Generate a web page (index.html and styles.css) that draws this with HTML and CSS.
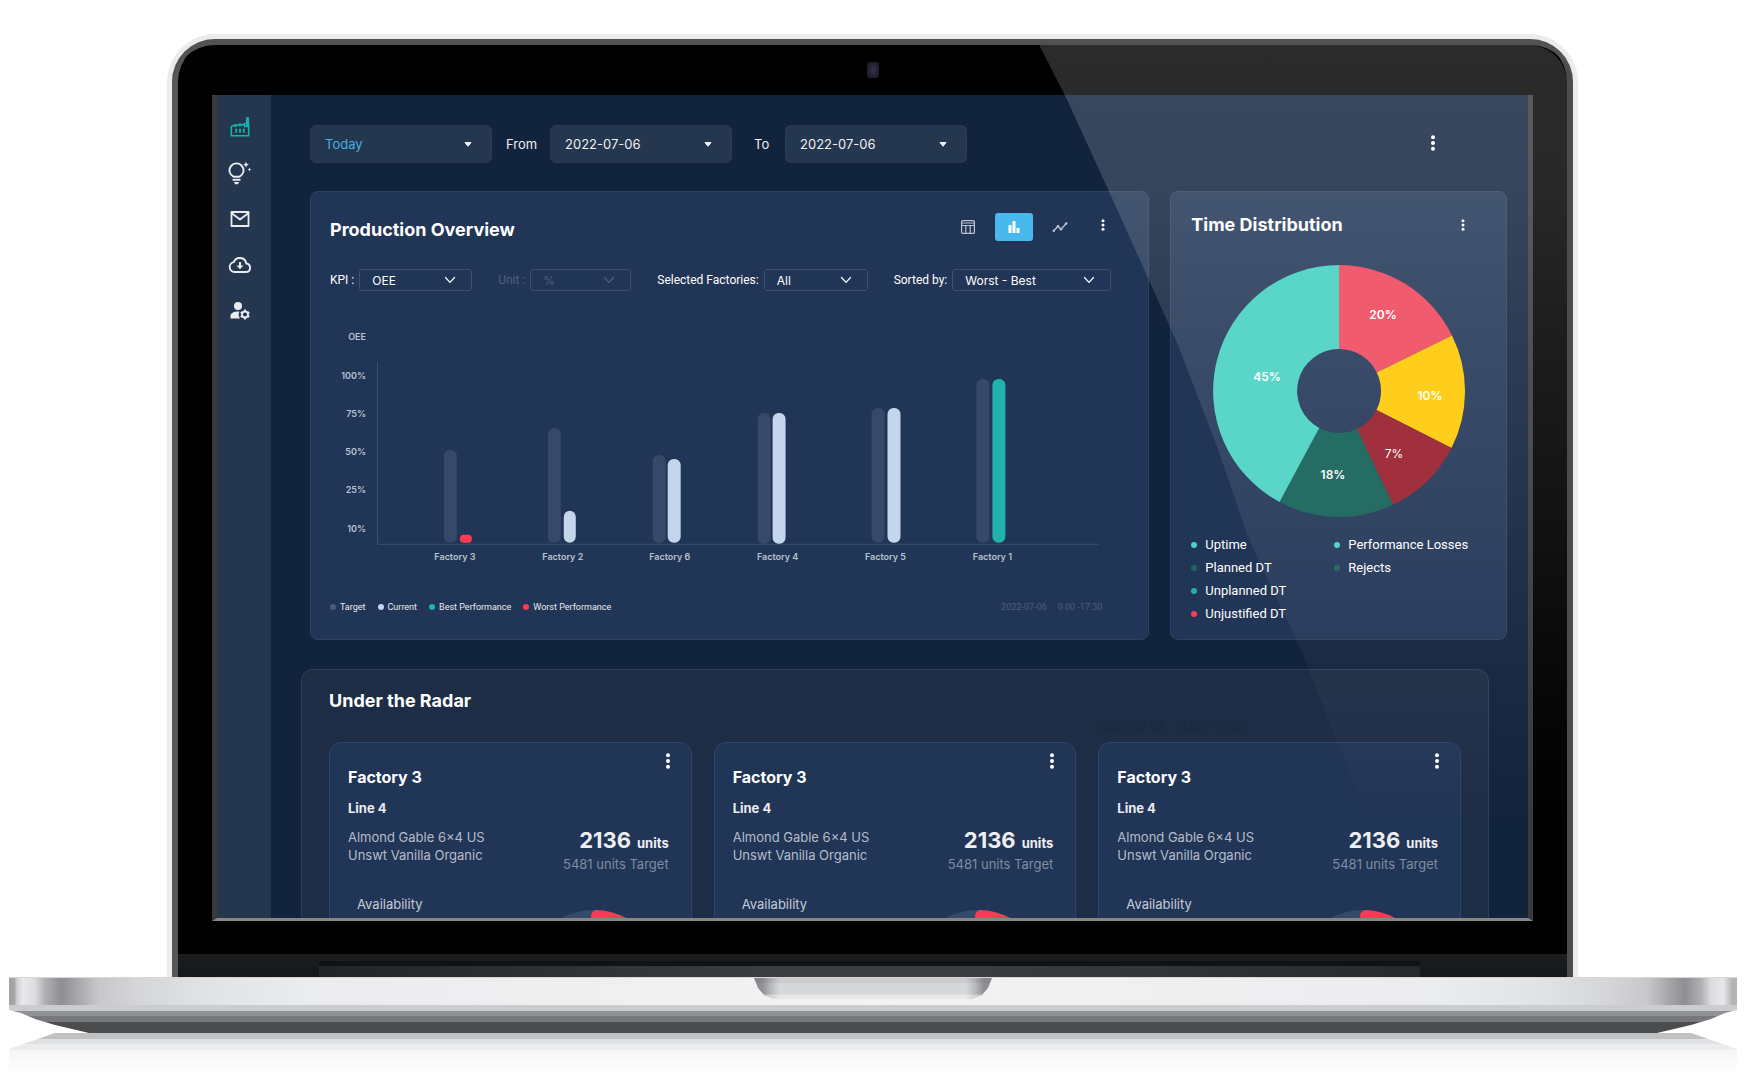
FILE: index.html
```html
<!DOCTYPE html>
<html lang="en">
<head>
<meta charset="utf-8">
<meta name="viewport" content="width=device-width, initial-scale=1">
<title>Production Overview</title>
<link rel="stylesheet" href="styles.css">
</head>
<body>
<svg class="defs" aria-hidden="true">
  <symbol id="caret" viewBox="0 0 8 5"><path d="M1 .5h6L4 4.300z" fill="currentColor" stroke="currentColor" stroke-linejoin="round"/></symbol>
  <symbol id="chevron" viewBox="0 0 12 8"><path d="M1.500 1.500 6 6.300l4.500-4.800" fill="none" stroke="currentColor" stroke-width="1.200" stroke-linecap="round"/></symbol>
  <symbol id="kebab" viewBox="0 0 4 16"><circle cx="2" cy="2.200" r="2"/><circle cx="2" cy="8" r="2"/><circle cx="2" cy="13.800" r="2"/></symbol>
  <symbol id="gauge" viewBox="0 0 136 136">
    <circle cx="68" cy="68" r="62" fill="none" stroke="#344a6b" stroke-width="12"/>
    <path d="M71 6a62 62 0 0 1 50 30" fill="none" stroke="#f23d54" stroke-width="12" stroke-linecap="round"/>
  </symbol>
</svg>
<div class="laptop">
  <div class="lid">
    <div class="bezel-top"><span class="camera"></span></div>
    <div class="screen">
      <nav class="sidebar" aria-label="Main">
        <a href="#" class="active" aria-label="Factories"><svg viewBox="0 0 24 24"><path d="M3.300 20.700v-9.200L7.500 9.800v1.400L12 9v1.500l4.500-1.600v2.600h4.200v9.200z" fill="none" stroke="currentColor" stroke-width="1.600"/><path d="M18.300 2h2.600l.6 9.500h-4.200z" fill="currentColor"/><path d="M8.200 13.800v4M12 13.800v4M15.800 13.800v4" stroke="currentColor" stroke-width="1.900"/></svg></a>
        <a href="#" aria-label="Insights"><svg viewBox="0 0 24 24"><g fill="none" stroke="currentColor" stroke-width="1.900"><path d="M5.700 15.800a7 7 0 1 1 5.600 0z" stroke-linejoin="round"/><path d="M4.500 18.800h8"/></g><path d="M5.800 21h5.400l-1.400 2.200H7.200zM18 .8l.9 2 2 .9-2 .9-.9 2-.9-2-2-.9 2-.9zM21.500 6.500l.6 1.400 1.400.6-1.400.6-.6 1.400-.6-1.400-1.400-.6 1.400-.6z" fill="currentColor"/></svg></a>
        <a href="#" aria-label="Messages"><svg viewBox="0 0 24 24"><path d="M3.500 5h17v14h-17zM3.500 6l8.500 6.500L20.500 6" fill="none" stroke="currentColor" stroke-width="1.800" stroke-linejoin="round"/></svg></a>
        <a href="#" aria-label="Downloads"><svg viewBox="0 0 24 24"><path d="M6.500 19a5 5 0 0 1-.8-9.900A6.600 6.600 0 0 1 18.300 10.500 4.300 4.300 0 0 1 18.500 19z" fill="none" stroke="currentColor" stroke-width="1.900"/><path d="M11 9h2v3.500h2.500L12 16.300l-3.500-3.800H11z" fill="currentColor"/></svg></a>
        <a href="#" aria-label="User settings"><svg viewBox="0 0 24 24"><circle cx="10" cy="7" r="4" fill="currentColor"/><path d="M2.500 19.500v-2.800c0-2.700 4-4.200 7.500-4.200.6 0 1 0 1.500.1a6.500 6.500 0 0 0 .5 6.900z" fill="currentColor"/><circle cx="17" cy="15.500" r="3" fill="none" stroke="currentColor" stroke-width="1.800"/><path d="M17 10.600v2M17 18.400v2M12.700 13.100l1.700 1M19.600 16.900l1.700 1M12.700 17.900l1.700-1M19.600 14.100l1.700-1" stroke="currentColor" stroke-width="1.900"/></svg></a>
      </nav>
      <main class="content">
        <div class="toolbar">
          <span class="field period"><select aria-label="Period"><option>Today</option></select><svg><use href="#caret"/></svg></span>
          <label for="from">From</label>
          <span class="field"><select id="from"><option>2022-07-06</option></select><svg><use href="#caret"/></svg></span>
          <label for="to" class="to">To</label>
          <span class="field"><select id="to"><option>2022-07-06</option></select><svg><use href="#caret"/></svg></span>
          <button class="kebab" aria-label="Page menu"><svg><use href="#kebab"/></svg></button>
        </div>

        <div class="overview">
          <section class="card production">
            <header>
              <h2>Production Overview</h2>
              <div class="views">
                <button aria-label="Table view"><svg viewBox="0 0 16 16" fill="none" stroke="currentColor" stroke-width="1.200"><rect x="1.600" y="1.600" width="12.800" height="12.800" rx="1"/><path d="M1.600 4h12.800M1.600 6.500h12.800M5.800 6.500v8M10.200 6.500v8"/></svg></button>
                <button class="selected" aria-label="Bar view"><svg viewBox="0 0 16 16" fill="currentColor"><path d="M2.500 6h3v8h-3zM6.500 2h3v12h-3zM10.500 9h3v5h-3z"/></svg></button>
                <button aria-label="Line view"><svg viewBox="0 0 16 16"><path d="M1.800 11.800 6 7.300l3 3L14.200 4.500" fill="none" stroke="currentColor" stroke-width="1.300"/><g fill="currentColor"><circle cx="1.800" cy="11.800" r="1.300"/><circle cx="6" cy="7.300" r="1.300"/><circle cx="9" cy="10.300" r="1.300"/><circle cx="14.200" cy="4.500" r="1.300"/></g></svg></button>
              </div>
              <button class="kebab small" aria-label="Production menu"><svg><use href="#kebab"/></svg></button>
            </header>
            <div class="filters">
              <div class="filter kpi"><label for="kpi">KPI :</label><span class="box"><select id="kpi"><option>OEE</option></select><svg><use href="#chevron"/></svg></span></div>
              <div class="filter unit"><label for="unit">Unit :</label><span class="box"><select id="unit" disabled><option>%</option></select><svg><use href="#chevron"/></svg></span></div>
              <div class="filter factories"><label for="factories">Selected Factories:</label><span class="box"><select id="factories"><option>All</option></select><svg><use href="#chevron"/></svg></span></div>
              <div class="filter sorted"><label for="sorted">Sorted by:</label><span class="box"><select id="sorted"><option>Worst - Best</option></select><svg><use href="#chevron"/></svg></span></div>
            </div>
            <svg class="chart" viewBox="0 0 800 260" role="img" aria-label="OEE by factory">
              <g class="axis-y"><text x="36" y="19">OEE</text><text x="36" y="58">100%</text><text x="36" y="96">75%</text><text x="36" y="134">50%</text><text x="36" y="172">25%</text><text x="36" y="211">10%</text></g>
              <path d="M47.500 41v182.500H769" fill="none" stroke="#3c5070"/>
              <g class="target"><rect x="114" y="129" width="13" height="93" rx="6"/><rect x="218" y="107" width="13" height="115" rx="6"/><rect x="323" y="134" width="13" height="88" rx="6"/><rect x="428" y="92" width="13" height="131" rx="6"/><rect x="542" y="87" width="13" height="135" rx="6"/><rect x="647" y="58" width="13" height="164" rx="6"/></g>
              <g class="current"><rect class="worst" x="130" y="214" width="12" height="8" rx="4"/><rect x="234" y="190" width="12" height="32" rx="6"/><rect x="338" y="138" width="13" height="84" rx="6"/><rect x="443" y="92" width="13" height="131" rx="6"/><rect x="558" y="87" width="13" height="135" rx="6"/><rect class="best" x="663" y="58" width="13" height="164" rx="6"/></g>
              <g class="axis-x"><text x="125" y="239">Factory 3</text><text x="233" y="239">Factory 2</text><text x="340" y="239">Factory 6</text><text x="448" y="239">Factory 4</text><text x="556" y="239">Factory 5</text><text x="663" y="239">Factory 1</text></g>
            </svg>
            <footer>
              <ul class="legend"><li class="c-target">Target</li><li class="c-current">Current</li><li class="c-best">Best Performance</li><li class="c-worst">Worst Performance</li></ul>
              <p class="stamp"><span>2022-07-06</span><span>0:00 -17:30</span></p>
            </footer>
          </section>

          <section class="card time">
            <header>
              <h2>Time Distribution</h2>
              <button class="kebab small" aria-label="Time menu"><svg><use href="#kebab"/></svg></button>
            </header>
            <svg class="pie" viewBox="-126 -126 252 252" role="img" aria-label="Time distribution">
              <path fill="#f05b6e" d="M0-126A126 126 0 0 1 113-55.500L37.700-18.500A42 42 0 0 0 0-42z"/>
              <path fill="#ffcd1b" d="M113-55.500A126 126 0 0 1 112.500 57L37.500 19A42 42 0 0 0 37.700-18.500z"/>
              <path fill="#a0303e" d="M112.500 57A126 126 0 0 1 54 113.800L18 38A42 42 0 0 0 37.500 19z"/>
              <path fill="#256c64" d="M54 113.800A126 126 0 0 1-59.500 111L-19.800 37A42 42 0 0 0 18 38z"/>
              <path fill="#5ad6c8" d="M-59.500 111A126 126 0 0 1 0-126V-42A42 42 0 0 0-19.800 37z"/>
              <g><text x="44" y="-72">20%</text><text x="91" y="9">10%</text><text class="light" x="55" y="67">7%</text><text x="-6" y="88">18%</text><text x="-72" y="-10">45%</text></g>
            </svg>
            <ul class="keys">
              <li class="c-uptime">Uptime</li><li class="c-planned">Planned DT</li><li class="c-best">Unplanned DT</li><li class="c-worst">Unjustified DT</li>
              <li class="c-uptime">Performance Losses</li><li class="c-planned">Rejects</li>
            </ul>
          </section>
        </div>

        <section class="radar">
          <header><h2>Under the Radar</h2><p class="stamp"><span>2022-07-06</span><span>0:00 -17:30</span></p></header>
          <div class="lines">
            <article class="line">
              <button class="kebab" aria-label="Line menu"><svg><use href="#kebab"/></svg></button>
              <h3>Factory 3</h3><h4>Line 4</h4>
              <div class="facts"><p class="product">Almond Gable 6×4 US<br>Unswt Vanilla Organic</p><div class="count"><p class="made"><strong>2136</strong><b>units</b></p><p>5481 units Target</p></div></div>
              <div class="availability"><span>Availability</span><svg><use href="#gauge"/></svg></div>
            </article>
            <article class="line">
              <button class="kebab" aria-label="Line menu"><svg><use href="#kebab"/></svg></button>
              <h3>Factory 3</h3><h4>Line 4</h4>
              <div class="facts"><p class="product">Almond Gable 6×4 US<br>Unswt Vanilla Organic</p><div class="count"><p class="made"><strong>2136</strong><b>units</b></p><p>5481 units Target</p></div></div>
              <div class="availability"><span>Availability</span><svg><use href="#gauge"/></svg></div>
            </article>
            <article class="line">
              <button class="kebab" aria-label="Line menu"><svg><use href="#kebab"/></svg></button>
              <h3>Factory 3</h3><h4>Line 4</h4>
              <div class="facts"><p class="product">Almond Gable 6×4 US<br>Unswt Vanilla Organic</p><div class="count"><p class="made"><strong>2136</strong><b>units</b></p><p>5481 units Target</p></div></div>
              <div class="availability"><span>Availability</span><svg><use href="#gauge"/></svg></div>
            </article>
          </div>
        </section>
      </main>
    </div>
    <div class="bezel-bottom"></div>
    <div class="hinge"><div class="recess"></div></div>
    <div class="glare"></div>
  </div>
  <div class="deck"><div class="notch"></div></div>
  <div class="underside"></div>
  <div class="reflection"></div>
</div>
</body>
</html>
```
FILE: styles.css
```css
* { box-sizing: border-box; }
body { margin: 0; background: #fff; color: #fff; font-family: Inter, "Liberation Sans", sans-serif; font-size: 13px; }
h2, h3, h4, p, ul { margin: 0; padding: 0; }
ul { list-style: none; }
button, select { margin: 0; padding: 0; border: 0; background: none; color: inherit; font: inherit; }
select { appearance: none; opacity: 1; }
svg { display: block; }
.defs { position: absolute; width: 0; height: 0; }

/* Laptop shell */
.laptop { padding: 34px 19px 0 9px; overflow: hidden; }
.lid { position: relative; margin: 0 159px 0 158px; padding: 0 40px; border: 5px solid #ececed; border-bottom: 0; border-radius: 48px 48px 0 0; background: #000; box-shadow: inset 0 6px 0 #505254, inset 6px 0 0 #55575a, inset -6px 0 0 #4b4c4f; }
.bezel-top { display: flex; justify-content: center; align-items: center; height: 56px; padding-top: 6px; }
.camera { width: 12px; height: 16px; border-radius: 2px; background: radial-gradient(#34344a, #14141a); }
.bezel-bottom { height: 33px; }
.hinge { height: 23px; margin: 0 -34px; padding: 7px 147px 0 141px; background: linear-gradient(#1c1d1f, #161718); }
.recess { height: 16px; border-top: 5px solid #111213; background: linear-gradient(90deg, #232425, #3b3c3e 40%, #3b3c3e 60%, #28292a); }
.glare { position: absolute; inset: 6px 6px 23px 6px; z-index: 1; border-top-right-radius: 38px; pointer-events: none;
  background: linear-gradient(rgb(255 255 255 / .17), rgb(255 255 255 / .155) 16%, rgb(255 255 255 / .11) 34%, rgb(255 255 255 / .08) 50%, rgb(255 255 255 / .04) 66%, transparent 86%);
  clip-path: polygon(62% 0, 64% 6%, 67% 16%, 72% 33%, 75% 45%, 77% 54%, 81% 67%, 83% 75%, 86% 86%, 100% 86%, 100% 0); }
.deck { height: 28px; border-top: 1px solid #d6d6d7;
  background: linear-gradient(90deg, #a4a4a8 5px, #d0d0d2 8px, #e8e8ea 14px, #dcdcde 26px, #b0b0b2 36px, #8e8f92 52px, #a6a6a9 68px, #c8c8ca 90px, #d5d6d8 130px, #e2e3e5 200px, #ebecee 300px, #f3f3f3 50%, #ebecee calc(100% - 300px), #e2e3e5 calc(100% - 200px), #d5d6d8 calc(100% - 130px), #c8c8ca calc(100% - 90px), #a6a6a9 calc(100% - 68px), #8e8f92 calc(100% - 52px), #b0b0b2 calc(100% - 36px), #dcdcde calc(100% - 26px), #e8e8ea calc(100% - 14px), #c8c8ca calc(100% - 8px), #b4b4b7 calc(100% - 5px)); }
.notch { width: 238px; height: 21px; margin: 0 auto; background: linear-gradient(rgb(0 0 0 / .05) 5px, transparent 5px 16px, rgb(255 255 255 / .4) 17px), linear-gradient(90deg, #8e8f94 8px, #b4b5b8 16px, #d6d7d9 26px, #d6d7d9 calc(100% - 26px), #b4b5b8 calc(100% - 16px), #8e8f94 calc(100% - 8px)); clip-path: polygon(0 0, 100% 0, calc(100% - 4px) 10px, calc(100% - 10px) 17px, calc(100% - 20px) 100%, 20px 100%, 10px 17px, 4px 10px); }
.underside { height: 28px; background: linear-gradient(#cbccce 6px, #909194 6px 11px, #77787b 11px 17px, #4b4c4e 17px); clip-path: polygon(0 0, 100% 0, 100% 5px, calc(100% - 12px) 8px, calc(100% - 26px) 14px, calc(100% - 46px) 20px, calc(100% - 80px) 100%, 80px 100%, 46px 20px, 26px 14px, 12px 8px, 0 5px); }
.reflection { height: 42px; background: linear-gradient(#c0c1c3 6px, #e0e1e3 6px 11px, #ebeced 11px 17px, #f4f5f5 17px, #fff); clip-path: polygon(46px 0, calc(100% - 46px) 0, 100% 16px, 100% 100%, 0 100%, 0 16px); }

/* Application */
.screen { display: flex; height: calc(100vh - 264px); border: solid #3a3a3a; border-width: 0 5px 3px; border-bottom-color: #888681; background: #12233e; overflow: hidden; }
.sidebar { display: flex; flex: none; flex-direction: column; align-items: center; gap: 22px; width: 54px; padding: 20px 8px 0 0; background: #25364f; }
.sidebar a { color: #e9ebf0; }
.sidebar .active { color: #16b1a9; }
.sidebar svg { width: 24px; height: 24px; }
.content { flex: 1; min-width: 0; padding: 30px 21px 0 30px; }

.kebab { display: grid; place-items: center; width: 16px; height: 20px; }
.kebab svg { width: 4px; height: 16px; fill: #fff; }
.kebab.small svg { height: 12px; }

.toolbar { display: flex; align-items: center; padding-left: 9px; font-size: 13px; color: #eef0f4; }
.toolbar label { width: 58px; padding-left: 14px; }
.toolbar .to { width: 53px; padding-left: 22px; }
.toolbar .kebab { margin: 0 66px 2px auto; }
.field { display: grid; align-items: center; width: 182px; height: 38px; border: 1px solid #2a3b53; border-radius: 6px; background: #25364f; }
.field select, .field svg, .box select, .box svg { grid-area: 1 / 1; }
.field select { height: 36px; padding-left: 14px; }
.field svg { justify-self: end; width: 8px; height: 5px; margin-right: 19px; pointer-events: none; }
.period select { color: #46afe3; }

.overview { display: grid; grid-template-columns: 840fr 337fr; gap: 21px; margin: 28px 0 29px 9px; }
.card { min-width: 0; border: 1px solid #2e4260; border-radius: 8px; background: #213556; }
h2 { font-size: 18px; font-weight: 700; line-height: 24px; }
.card header { display: flex; align-items: center; }
.production { padding: 20px 19px 26px; }
.production header { height: 30px; }
.production h2 { padding-top: 6px; }
.views { display: flex; gap: 8px; margin-left: auto; }
.views button { display: grid; place-items: center; width: 38px; height: 28px; border-radius: 3px; color: #bcc4d0; }
.views svg { width: 16px; height: 16px; }
.views .selected { background: #49b8ec; color: #fff; }
.production .kebab { margin: 0 18px 4px 16px; }

.filters { display: flex; justify-content: space-between; margin: 27px 18px 30px 0; font-size: 12px; }
.filter { display: flex; align-items: center; gap: 5px; }
.filter label { font-family: Roboto, sans-serif; }
.box { display: grid; align-items: center; height: 22px; border: 1px solid #3c4f6d; border-radius: 3px; }
.box select { padding-left: 12px; }
.box svg { justify-self: end; width: 12px; height: 8px; margin-right: 15px; pointer-events: none; }
.kpi .box { width: 113px; }
.unit { color: #50627d; }
.unit .box { width: 101px; }
.factories .box { width: 104px; }
.sorted .box { width: 159px; }

.chart { width: 100%; height: auto; font-size: 9px; font-weight: 600; }
.chart text { fill: #b9c2cf; }
.axis-y { text-anchor: end; }
.axis-x, .pie g { text-anchor: middle; }
.target { fill: #364968; }
.current { fill: #c5d5ec; }
.current .worst { fill: #ff3b53; }
.current .best { fill: #22b2ae; }
.production footer { display: flex; justify-content: space-between; margin-top: 20px; font: 9px/12px Roboto, sans-serif; color: #e8ebf0; }
.legend { display: flex; gap: 12px; }
.legend li, .keys li { display: flex; align-items: center; }
.legend li { gap: 4px; }
li::before { content: ""; width: 6px; height: 6px; border-radius: 50%; background: currentColor; }
.c-target::before { background: #4a5c7a; }
.c-current::before { background: #c5d5ec; }
.c-best::before { background: #22b2ae; }
.c-worst::before { background: #ff3b53; }
.c-uptime::before { background: #4bd1c4; }
.c-planned::before { background: #1c655e; }
.stamp { display: flex; gap: 11px; }
.production .stamp { margin-right: 27px; color: #4d5f7c; }

.time { padding: 21px 20px 14px; }
.time header { justify-content: space-between; }
.time .kebab { margin-right: 15px; }
.pie { position: relative; z-index: 2; width: 252px; height: 252px; margin: 28px auto 16px; font-size: 12px; font-weight: 600; }
.pie text { fill: #fff; }
.pie .light { font-weight: 400; }
.keys { display: grid; grid-template-rows: repeat(4, 23px); grid-auto-flow: column; grid-template-columns: 143px auto; font: 13px Roboto, sans-serif; }
.keys li { gap: 8px; white-space: nowrap; }

.radar { margin-right: 18px; padding: 19px 27px 0; border: 1px solid #2f3f56; border-radius: 12px 12px 0 0; background: #1e2d46; }
.radar header { display: flex; align-items: flex-end; height: 53px; }
.radar h2 { flex: 1; align-self: flex-start; }
.radar .stamp { gap: 15px; width: 362px; padding-bottom: 7px; font: 13px/16px Roboto, sans-serif; color: #1a2840; }
.lines { display: grid; grid-template-columns: repeat(3, 1fr); gap: 22px; }
.line { padding: 8px 22px 0 18px; border: 1px solid #2e4567; border-radius: 12px 12px 0 0; background: #213556; }
.line .kebab { margin-left: auto; margin-right: -7px; }
h3 { font-size: 16px; font-weight: 700; line-height: 20px; margin-top: -4px; }
h4 { margin: 12px 0 11px; font-size: 13px; font-weight: 700; line-height: 18px; color: #e9ecf1; }
.facts { display: flex; justify-content: space-between; align-items: flex-start; line-height: 18px; color: #b5bdca; }
.count { color: #7f8ca1; text-align: right; }
.made { display: flex; justify-content: flex-end; align-items: baseline; gap: 6px; line-height: 24px; color: #eceef3; }
.made strong { font-size: 22px; font-weight: 700; }
.made b { font-weight: 700; }
.availability { display: flex; justify-content: space-between; margin-top: 22px; padding: 0 7px 0 9px; line-height: 18px; color: #c5ccd6; }
.availability svg { width: 136px; height: 136px; margin-top: 15px; }
```
